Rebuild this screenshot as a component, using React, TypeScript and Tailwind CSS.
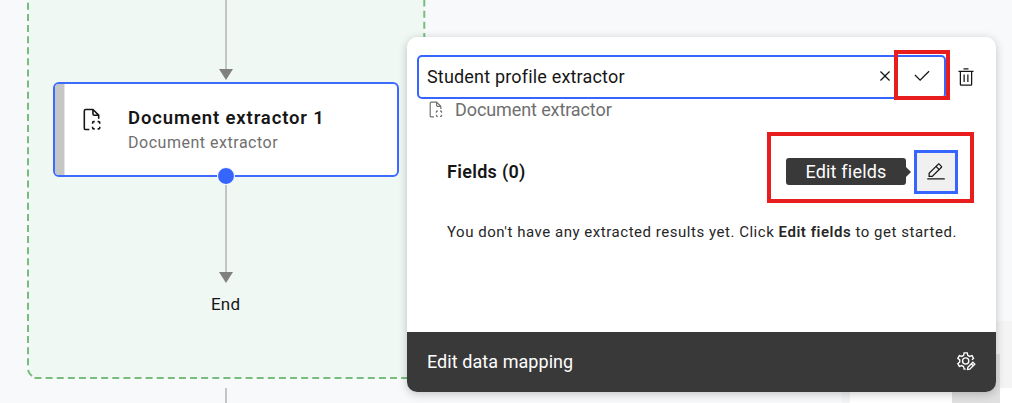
import React from "react";

type IconProps = { className?: string };

const Extractor = ({ className = "" }: IconProps) => (
  <svg viewBox="0 0 32 32" className={className} fill="none" stroke="currentColor" strokeWidth="2.2">
    <path d="M13 30H8a2 2 0 0 1-2-2V4a2 2 0 0 1 2-2h10l8 8v5M18 2v6a2 2 0 0 0 2 2h6" />
    <path d="M17.500 22v-1.500a1.500 1.500 0 0 1 1.500-1.500h1.500M24.500 19H26a1.500 1.500 0 0 1 1.500 1.500V22M27.500 26v1.500A1.500 1.500 0 0 1 26 29h-1.500M20.500 29H19a1.500 1.500 0 0 1-1.500-1.500V26" />
  </svg>
);

const Close = ({ className = "" }: IconProps) => (
  <svg viewBox="0 0 32 32" className={className} fill="currentColor">
    <path d="M17.414 16 24 9.414 22.586 8 16 14.586 9.414 8 8 9.414 14.586 16 8 22.586 9.414 24 16 17.414 22.586 24 24 22.586z" />
  </svg>
);

const Check = ({ className = "" }: IconProps) => (
  <svg viewBox="0 0 32 32" className={className} fill="currentColor">
    <path d="M13 24 4 15l1.414-1.414L13 21.171 26.586 7.586 28 9z" />
  </svg>
);

const Trash = ({ className = "" }: IconProps) => (
  <svg viewBox="0 0 32 32" className={className} fill="currentColor">
    <path d="M12 12h2v12h-2zM18 12h2v12h-2zM4 6v2h2v20a2 2 0 0 0 2 2h16a2 2 0 0 0 2-2V8h2V6zm4 22V8h16v20zM12 2h8v2h-8z" />
  </svg>
);

const Edit = ({ className = "" }: IconProps) => (
  <svg viewBox="0 0 32 32" className={className} fill="currentColor">
    <path d="M2 26h28v2H2zM25.4 9c.8-.8.8-2 0-2.8l-3.6-3.6c-.8-.8-2-.8-2.8 0l-15 15V24h6.4zm-5-5L24 7.6l-3 3L17.4 7zM6 22v-3.600l10-10 3.600 3.600-10 10z" />
  </svg>
);

const GearEdit = ({ className = "" }: IconProps) => (
  <svg viewBox="0 0 32 32" className={className} fill="none" stroke="currentColor" strokeWidth="2.200">
    <path d="M15.500 29h-2.500l-.8-4-2.900-1.700-3.900 1.300-2.500-4.300 3.100-2.700v-3.300L2.900 11.700l2.500-4.300 3.900 1.300L12.200 7l.8-4h5l.8 4 2.900 1.700 3.900-1.300 2.500 4.300-2.600 2.200" />
    <circle cx="15.500" cy="16" r="5" />
    <path d="m18.500 29.500.5-3.500 8-8 3 3-8 8zM24.500 20.500l3 3" />
  </svg>
);

const Arrow = ({ className = "" }: IconProps) => (
  <svg viewBox="0 0 14 11" className={className} fill="#808080">
    <path d="M0 0h14L7 11z" />
  </svg>
);

function Canvas() {
  return (
    <>
      <svg className="absolute inset-0" width="1012" height="403" fill="none">
        <path d="M28 0v369q0 9 9 9h378q9 0 9-9V0z" fill="#eff8f3" />
        <g stroke="#78bd7d" strokeWidth="2" strokeDasharray="7 4.11">
          <path d="M28-8.300V367" />
          <path d="M424.300-.4V368" />
          <path d="M34.500 378H416" />
          <path d="M28 370q1 4 4 6" strokeDasharray="none" />
        </g>
        <path d="M226 0v72M226 177v98M226 388v15" stroke="#b5b9bb" strokeWidth="1.600" />
      </svg>
      <Arrow className="absolute left-[219px] top-[69px] h-[11px] w-[14px]" />
      <Arrow className="absolute left-[219px] top-[272px] h-[11px] w-[14px]" />
      <div className="absolute left-[53px] top-[82px] flex h-[95px] w-[346px] overflow-hidden rounded-md border-2 border-[#3d6bff] bg-white">
        <div className="w-[10px] shrink-0 border-r border-[#e4e4e4] bg-[#c6c6c6]" />
        <Extractor className="ml-[15px] mt-[24px] h-[23px] w-[23px] shrink-0 text-[#161616]" />
        <div className="ml-[25px] mt-[21px] whitespace-nowrap">
          <div className="text-[18.5px] font-semibold leading-[26px] tracking-[0.87px] text-[#161616]">Document extractor 1</div>
          <div className="text-[16px] leading-[24px] tracking-[0.52px] text-[#6f6f6f]">Document extractor</div>
        </div>
      </div>
      <div className="absolute left-[217px] top-[167px] size-[18px] rounded-full border-[1.5px] border-white bg-[#3665ff]" />
      <div className="absolute left-[211px] top-[294px] text-[17px] leading-[20px] tracking-[0.2px] text-[#161616]">End</div>
      <div className="absolute left-[842px] top-[321px] h-[82px] w-[170px] bg-[#f4f4f4]" />
      <div className="absolute left-[850px] top-[388px] h-[15px] w-[162px] bg-white" />
      <div className="absolute left-[952px] top-[354px] h-[49px] w-[48px] bg-[#e0e0e0]" />
    </>
  );
}

function Panel() {
  return (
    <section className="absolute left-[407px] top-[37px] flex h-[355px] w-[589px] flex-col rounded-[10px] bg-white shadow-[0_2px_10px_rgba(0,0,0,0.22)]">
      <header className="mt-[18px] flex items-center pl-[10px]">
        <div className="relative flex h-[44px] w-[529px] items-center rounded-[5px] border-2 border-[#3665ff] pb-[2px] pl-[8px]">
          <span className="grow whitespace-nowrap text-[18px] tracking-[0.18px] text-[#161616]">Student profile extractor</span>
          <Close className="mr-[17px] size-[20px] text-[#161616]" />
          <Check className="mr-[12px] size-[20px] text-[#161616]" />
          <div className="absolute -right-[6px] -top-[7px] h-[50px] w-[56px] border-4 border-[#e81e1e]" />
        </div>
        <Trash className="ml-[10px] size-[20px] text-[#161616]" />
      </header>
      <div className="flex h-[24px] items-center pb-[3px] pl-[20px] text-[#6f6f6f]">
        <Extractor className="size-[17px]" />
        <span className="ml-[11px] whitespace-nowrap text-[18px] tracking-[-0.1px]">Document extractor</span>
      </div>
      <div className="mt-[9px] flex h-[71px] items-center justify-between pl-[40px] pr-[22px]">
        <h2 className="mt-[8px] whitespace-nowrap text-[18px] font-semibold tracking-[0.3px] text-[#161616]">Fields (0)</h2>
        <div className="flex h-[71px] w-[207px] items-center border-4 border-[#e81e1e] pl-[15px] pt-[8px]">
          <div className="flex h-[27px] w-[120px] items-center justify-center rounded-[3px] bg-[#393939] pb-px text-[18px] tracking-[0.2px] text-white">Edit fields</div>
          <svg viewBox="0 0 5 10" className="h-[10px] w-[5px]" fill="#393939"><path d="M0 0l5 5-5 5z" /></svg>
          <div className="ml-[3px] flex size-[44px] items-center justify-center border-[3px] border-[#3665ff] bg-[#f0f0f0]">
            <Edit className="size-[20px] text-[#161616]" />
          </div>
        </div>
      </div>
      <p className="mt-[18px] whitespace-nowrap pl-[40px] text-[15px] leading-[22px] tracking-[0.53px] text-[#262626]">
        You don't have any extracted results yet. Click <b className="font-semibold">Edit fields</b> to get started.
      </p>
      <footer className="mt-auto flex h-[60px] items-center justify-between rounded-b-[10px] bg-[#393939] pb-[2px] pl-[20px] pr-[20px] text-white">
        <span className="whitespace-nowrap text-[18px] tracking-[0.06px]">Edit data mapping</span>
        <GearEdit className="size-[20px]" />
      </footer>
    </section>
  );
}

export default function App() {
  return (
    <main className="relative h-[403px] w-[1012px] overflow-hidden bg-[#f8f9fb] font-[Roboto,sans-serif]">
      <Canvas />
      <Panel />
    </main>
  );
}
